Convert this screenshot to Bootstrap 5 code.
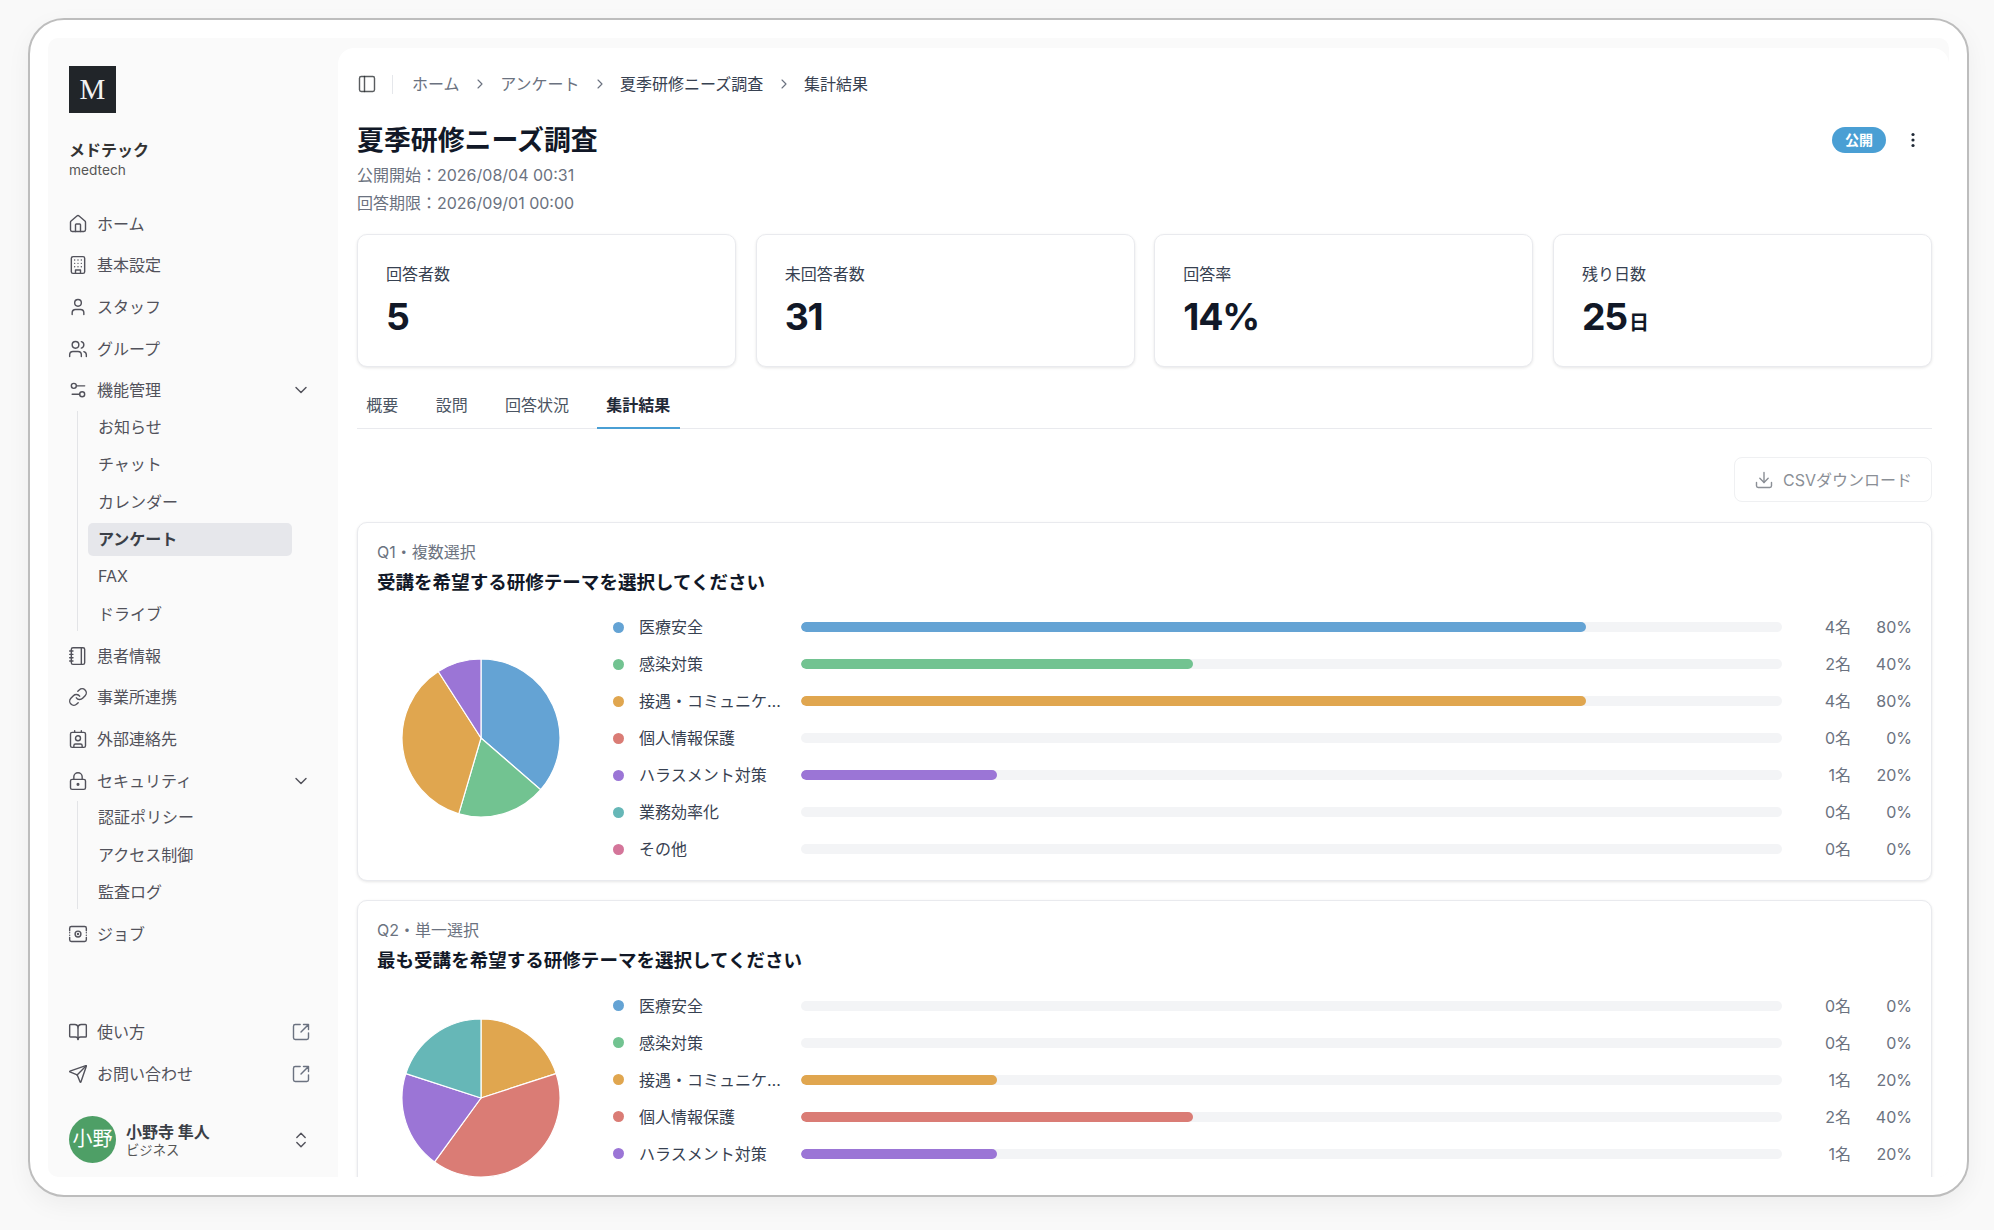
<!DOCTYPE html>
<html lang="ja">
<head>
<meta charset="utf-8">
<title>夏季研修ニーズ調査</title>
<link href="https://cdn.jsdelivr.net/npm/bootstrap@5.3.0/dist/css/bootstrap.min.css" rel="stylesheet">
<style>
html,body{height:100%;}
body{background:#f9f9f9;overflow:hidden;font-family:Inter,"Noto Sans CJK JP",sans-serif;font-size:16px;color:#374151;}
.shell{width:1941px;height:1179px;margin:18px 0 0 28px;padding:18px;background:#fff;border:2px solid #bdbdbd;border-radius:36px;box-shadow:0 8px 24px rgba(0,0,0,.05);}
.shell-inner{height:100%;background:#fafafa;border-radius:10px;overflow:hidden;padding-top:10px;}
.side{width:290px;padding:18px 27px 14px 21px;height:100%;flex:none;color:#52525b;}
.logo-box{width:47px;height:47px;background:#212529;color:#f2f2f2;font-family:"Liberation Serif",serif;font-size:29px;line-height:47px;text-align:center;}
.org-name{font-weight:700;font-size:16px;line-height:22px;margin-top:26px;color:#333;}
.org-sub{font-size:13.7px;line-height:18px;color:#555;}
.nav-list{margin-top:24px;}
.nav-row{height:41.6px;display:flex;align-items:center;gap:9px;color:#52525b;text-decoration:none;margin-left:-1px;}
.nav-row .tail{margin-left:auto;}
.ico{width:20px;height:20px;flex:none;fill:none;stroke:currentColor;stroke-width:1.7;stroke-linecap:round;stroke-linejoin:round;}
.tail-ext{color:#6b7280;}
.sub-list{margin:-2.5px 0 1.4px 8px;padding-left:10px;border-left:1px solid #e3e4e7;}
.sub-item{display:block;height:33.2px;line-height:33.2px;margin:0 19px 4.13px 0;padding-left:10px;border-radius:5px;color:#52525b;text-decoration:none;}
.sub-item:first-child{margin-top:2.6px;}
.sub-item.is-on{background:#e6e7eb;font-weight:700;color:#3a3f47;}
.user-row{margin-top:21.5px;gap:10px;}
.ava{width:47px;height:47px;border-radius:50%;background:#4e9f66;color:#fff;font-size:20px;line-height:47px;text-align:center;flex:none;white-space:nowrap;overflow:hidden;}
.u-name{font-weight:700;line-height:20px;color:#3a3f47;}
.u-plan{font-size:13.33px;line-height:16px;color:#555;}
.mainp{background:#fff;border-radius:16px 16px 0 0;padding:24px 17px 0 19px;height:100%;overflow:hidden;min-width:0;}
.crumb-bar{height:24px;}
.crumb-sep{width:1px;height:19px;background:#e5e7eb;margin:0 19px 0 15px;}
.crumb-a{color:#6b7280;text-decoration:none;}
.crumb-b{color:#374151;}
.crumb-chev{width:16px;height:16px;margin:0 12.3px;fill:none;stroke:#6b7280;stroke-width:1.7;stroke-linecap:round;stroke-linejoin:round;flex:none;}
.page-title{font-size:26.9px;font-weight:700;line-height:36px;margin:26px 0 3px;color:#111827;}
.meta-line{line-height:28px;color:#6b7280;}
.head-tools{margin-top:31px;}
.pub-badge{background:#4a9fd4;color:#fff;font-size:14px;font-weight:700;width:54px;height:26px;line-height:26px;padding:0;border-radius:13px;}
.kebab{width:20px;height:20px;margin:0 9px 0 17px;fill:#1f2937;}
.stat-grid{display:grid;grid-template-columns:repeat(4,1fr);gap:19.5px;margin-top:17px;}
.stat-card{height:133px;border:1px solid #e9eaee;border-radius:10px;box-shadow:0 1px 3px rgba(0,0,0,.1);padding:27px 28px 0;}
.stat-label{line-height:24px;color:#374151;}
.stat-num{font-size:37.33px;font-weight:700;line-height:46px;margin-top:8px;color:#111827;letter-spacing:-.03em;}
.stat-unit{font-size:20px;margin-left:2px;letter-spacing:0;}
.tabs-wrap{margin-top:19px;height:43px;border-bottom:1.5px solid #e9eaee;gap:18.67px;}
.tabs-wrap .nav-link{padding:0 9.33px;height:43px;line-height:38px;color:#4b5563;}
.tabs-wrap .nav-link.active{font-weight:700;color:#1f2937;border-bottom:2.67px solid #4a9fd4;}
.csv-row{margin-top:28px;}
.csv-btn{width:198px;height:45px;padding:0;display:flex;align-items:center;justify-content:center;gap:9px;border:1px solid #eff0f2;border-radius:8px;color:#8b8f96;font-size:16px;background:#fff;}
.q-card{border:1px solid #e9eaee;border-radius:10px;box-shadow:0 1px 3px rgba(0,0,0,.1);padding:17px 19px 12px;margin-top:19.5px;}
.q-kind{line-height:24px;color:#6b7280;}
.q-title{font-size:18.55px;font-weight:700;line-height:28px;margin:4px 0 13px;color:#111827;}
.pie-col{width:208px;flex:none;margin-right:28px;}
.pie-col svg{width:160px;height:160px;display:block;}
.pie-col path{stroke:#fff;stroke-width:1.2;}
.q-row{height:37px;}
.dot{width:11px;height:11px;border-radius:50%;flex:none;margin-right:15px;}
.opt-name{width:146px;margin-right:16px;flex:none;color:#374151;white-space:nowrap;overflow:hidden;text-overflow:ellipsis;}
.bar-track{height:10px;flex:1 1 auto;background:#f3f4f6;border-radius:5px;}
.bar-fill{border-radius:5px;}
.q-count{width:69px;text-align:right;flex:none;color:#6b7280;}
.q-pct{width:61px;text-align:right;flex:none;color:#6b7280;}
.c1{background:#64a3d4;}.c2{background:#72c391;}.c3{background:#e0a64f;}.c4{background:#da7c75;}.c5{background:#9b75d6;}.c6{background:#66b7b7;}.c7{background:#d4759a;}
</style>
</head>
<body>
<div class="shell">
<div class="shell-inner d-flex">
  <aside class="side d-flex flex-column">
    <div class="logo-box">M</div>
    <div class="org-name">メドテック</div>
    <div class="org-sub">medtech</div>
    <div class="nav-list">
      <a class="nav-row" href="#"><svg class="ico" viewBox="0 0 24 24"><path d="M15 21v-8a1 1 0 0 0-1-1h-4a1 1 0 0 0-1 1v8"/><path d="M3 10a2 2 0 0 1 .709-1.528l7-5.999a2 2 0 0 1 2.582 0l7 5.999A2 2 0 0 1 21 10v9a2 2 0 0 1-2 2H5a2 2 0 0 1-2-2z"/></svg>ホーム</a>
      <a class="nav-row" href="#"><svg class="ico" viewBox="0 0 24 24"><rect x="4" y="2" width="16" height="20" rx="2"/><path d="M9 22v-4h6v4M8 6h.01M16 6h.01M12 6h.01M12 10h.01M12 14h.01M16 10h.01M16 14h.01M8 10h.01M8 14h.01"/></svg>基本設定</a>
      <a class="nav-row" href="#"><svg class="ico" viewBox="0 0 24 24"><path d="M19 21v-2a4 4 0 0 0-4-4H9a4 4 0 0 0-4 4v2"/><circle cx="12" cy="7" r="4"/></svg>スタッフ</a>
      <a class="nav-row" href="#"><svg class="ico" viewBox="0 0 24 24"><path d="M16 21v-2a4 4 0 0 0-4-4H6a4 4 0 0 0-4 4v2"/><circle cx="9" cy="7" r="4"/><path d="M22 21v-2a4 4 0 0 0-3-3.87M16 3.13a4 4 0 0 1 0 7.75"/></svg>グループ</a>
      <a class="nav-row" href="#"><svg class="ico" viewBox="0 0 24 24"><path d="M20 7h-9M14 17H5"/><circle cx="17" cy="17" r="3"/><circle cx="7" cy="7" r="3"/></svg>機能管理<svg class="ico tail" viewBox="0 0 24 24"><path d="m6 9 6 6 6-6"/></svg></a>
      <div class="sub-list">
        <a class="sub-item" href="#">お知らせ</a>
        <a class="sub-item" href="#">チャット</a>
        <a class="sub-item" href="#">カレンダー</a>
        <a class="sub-item is-on" href="#">アンケート</a>
        <a class="sub-item" href="#">FAX</a>
        <a class="sub-item" href="#">ドライブ</a>
      </div>
      <a class="nav-row" href="#"><svg class="ico" viewBox="0 0 24 24"><path d="M2 6h4M2 10h4M2 14h4M2 18h4M16 2v20"/><rect x="4" y="2" width="16" height="20" rx="2"/></svg>患者情報</a>
      <a class="nav-row" href="#"><svg class="ico" viewBox="0 0 24 24"><path d="M10 13a5 5 0 0 0 7.54.54l3-3a5 5 0 0 0-7.07-7.07l-1.72 1.71"/><path d="M14 11a5 5 0 0 0-7.54-.54l-3 3a5 5 0 0 0 7.07 7.07l1.71-1.71"/></svg>事業所連携</a>
      <a class="nav-row" href="#"><svg class="ico" viewBox="0 0 24 24"><path d="M16 2v2M8 2v2M7 22v-2a2 2 0 0 1 2-2h6a2 2 0 0 1 2 2v2"/><circle cx="12" cy="11" r="3"/><rect x="3" y="4" width="18" height="18" rx="2"/></svg>外部連絡先</a>
      <a class="nav-row" href="#"><svg class="ico" viewBox="0 0 24 24"><circle cx="12" cy="16" r="1"/><rect x="3" y="10" width="18" height="12" rx="2"/><path d="M7 10V7a5 5 0 0 1 10 0v3"/></svg>セキュリティ<svg class="ico tail" viewBox="0 0 24 24"><path d="m6 9 6 6 6-6"/></svg></a>
      <div class="sub-list">
        <a class="sub-item" href="#">認証ポリシー</a>
        <a class="sub-item" href="#">アクセス制御</a>
        <a class="sub-item" href="#">監査ログ</a>
      </div>
      <a class="nav-row" href="#"><svg class="ico" viewBox="0 0 24 24"><path d="M2 8V5a2 2 0 0 1 2-2h16a2 2 0 0 1 2 2v3M2 16v3a2 2 0 0 0 2 2h16a2 2 0 0 0 2-2v-3M2 10.5h.01M2 13.5h.01M22 10.5h.01M22 13.5h.01"/><circle cx="12" cy="12" r="3.5"/><circle cx="12" cy="12" r=".6"/></svg>ジョブ</a>
    </div>
    <div class="mt-auto">
      <a class="nav-row" href="#"><svg class="ico" viewBox="0 0 24 24"><path d="M12 7v14"/><path d="M3 18a1 1 0 0 1-1-1V4a1 1 0 0 1 1-1h5a4 4 0 0 1 4 4 4 4 0 0 1 4-4h5a1 1 0 0 1 1 1v13a1 1 0 0 1-1 1h-6a3 3 0 0 0-3 3 3 3 0 0 0-3-3z"/></svg>使い方<svg class="ico tail tail-ext" viewBox="0 0 24 24"><path d="M21 13v6a2 2 0 0 1-2 2H5a2 2 0 0 1-2-2V5a2 2 0 0 1 2-2h6"/><path d="m21 3-9 9M15 3h6v6"/></svg></a>
      <a class="nav-row" href="#"><svg class="ico" viewBox="0 0 24 24"><path d="M14.536 21.686a.5.5 0 0 0 .937-.024l6.5-19a.496.496 0 0 0-.635-.635l-19 6.5a.5.5 0 0 0-.024.937l7.93 3.18a2 2 0 0 1 1.112 1.11z"/><path d="m21.854 2.147-10.94 10.939"/></svg>お問い合わせ<svg class="ico tail tail-ext" viewBox="0 0 24 24"><path d="M21 13v6a2 2 0 0 1-2 2H5a2 2 0 0 1-2-2V5a2 2 0 0 1 2-2h6"/><path d="m21 3-9 9M15 3h6v6"/></svg></a>
      <div class="d-flex align-items-center user-row">
        <div class="ava">小野</div>
        <div><div class="u-name">小野寺 隼人</div><div class="u-plan">ビジネス</div></div>
        <svg class="ico ms-auto" viewBox="0 0 24 24"><path d="m7 15 5 5 5-5M7 9l5-5 5 5"/></svg>
      </div>
    </div>
  </aside>

  <main class="mainp flex-grow-1">
    <div class="crumb-bar d-flex align-items-center">
      <svg class="ico text-body-secondary" viewBox="0 0 24 24"><rect x="3" y="3" width="18" height="18" rx="2"/><path d="M9 3v18"/></svg>
      <div class="crumb-sep"></div>
      <a class="crumb-a" href="#">ホーム</a>
      <svg class="crumb-chev" viewBox="0 0 24 24"><path d="m9 18 6-6-6-6"/></svg>
      <a class="crumb-a" href="#">アンケート</a>
      <svg class="crumb-chev" viewBox="0 0 24 24"><path d="m9 18 6-6-6-6"/></svg>
      <span class="crumb-b">夏季研修ニーズ調査</span>
      <svg class="crumb-chev" viewBox="0 0 24 24"><path d="m9 18 6-6-6-6"/></svg>
      <span class="crumb-b">集計結果</span>
    </div>

    <div class="d-flex justify-content-between align-items-start">
      <div>
        <h1 class="page-title">夏季研修ニーズ調査</h1>
        <div class="meta-line">公開開始：2026/08/04 00:31</div>
        <div class="meta-line">回答期限：2026/09/01 00:00</div>
      </div>
      <div class="d-flex align-items-center head-tools">
        <span class="badge pub-badge">公開</span>
        <svg class="kebab" viewBox="0 0 20 20"><circle cx="10" cy="4.5" r="1.6"/><circle cx="10" cy="10" r="1.6"/><circle cx="10" cy="15.5" r="1.6"/></svg>
      </div>
    </div>

    <div class="stat-grid">
      <div class="card stat-card"><div class="stat-label">回答者数</div><div class="stat-num">5</div></div>
      <div class="card stat-card"><div class="stat-label">未回答者数</div><div class="stat-num">31</div></div>
      <div class="card stat-card"><div class="stat-label">回答率</div><div class="stat-num">14%</div></div>
      <div class="card stat-card"><div class="stat-label">残り日数</div><div class="stat-num">25<span class="stat-unit">日</span></div></div>
    </div>

    <ul class="nav tabs-wrap">
      <li class="nav-item"><a class="nav-link" href="#">概要</a></li>
      <li class="nav-item"><a class="nav-link" href="#">設問</a></li>
      <li class="nav-item"><a class="nav-link" href="#">回答状況</a></li>
      <li class="nav-item"><a class="nav-link active" href="#">集計結果</a></li>
    </ul>

    <div class="csv-row d-flex justify-content-end">
      <button type="button" class="btn csv-btn"><svg class="ico" viewBox="0 0 24 24"><path d="M21 15v4a2 2 0 0 1-2 2H5a2 2 0 0 1-2-2v-4M12 15V3"/><path d="m7 10 5 5 5-5"/></svg>CSVダウンロード</button>
    </div>

    <div class="card q-card">
      <div class="q-kind">Q1・複数選択</div>
      <div class="q-title">受講を希望する研修テーマを選択してください</div>
      <div class="d-flex align-items-center">
        <div class="pie-col d-flex justify-content-center">
          <svg viewBox="0 0 160 160">
            <path fill="#64a3d4" d="M80 80L80 1A79 79 0 0 1 139.7 131.74Z"/>
            <path fill="#72c391" d="M80 80L139.7 131.74A79 79 0 0 1 57.75 155.8Z"/>
            <path fill="#e0a64f" d="M80 80L57.75 155.8A79 79 0 0 1 37.29 13.54Z"/>
            <path fill="#9b75d6" d="M80 80L37.29 13.54A79 79 0 0 1 80 1Z"/>
          </svg>
        </div>
        <div class="flex-grow-1">
          <div class="q-row d-flex align-items-center"><span class="dot c1"></span><span class="opt-name">医療安全</span><div class="progress bar-track"><div class="progress-bar bar-fill c1" style="width:80%"></div></div><span class="q-count">4名</span><span class="q-pct">80%</span></div>
          <div class="q-row d-flex align-items-center"><span class="dot c2"></span><span class="opt-name">感染対策</span><div class="progress bar-track"><div class="progress-bar bar-fill c2" style="width:40%"></div></div><span class="q-count">2名</span><span class="q-pct">40%</span></div>
          <div class="q-row d-flex align-items-center"><span class="dot c3"></span><span class="opt-name">接遇・コミュニケーション</span><div class="progress bar-track"><div class="progress-bar bar-fill c3" style="width:80%"></div></div><span class="q-count">4名</span><span class="q-pct">80%</span></div>
          <div class="q-row d-flex align-items-center"><span class="dot c4"></span><span class="opt-name">個人情報保護</span><div class="progress bar-track"><div class="progress-bar bar-fill c4" style="width:0%"></div></div><span class="q-count">0名</span><span class="q-pct">0%</span></div>
          <div class="q-row d-flex align-items-center"><span class="dot c5"></span><span class="opt-name">ハラスメント対策</span><div class="progress bar-track"><div class="progress-bar bar-fill c5" style="width:20%"></div></div><span class="q-count">1名</span><span class="q-pct">20%</span></div>
          <div class="q-row d-flex align-items-center"><span class="dot c6"></span><span class="opt-name">業務効率化</span><div class="progress bar-track"><div class="progress-bar bar-fill c6" style="width:0%"></div></div><span class="q-count">0名</span><span class="q-pct">0%</span></div>
          <div class="q-row d-flex align-items-center"><span class="dot c7"></span><span class="opt-name">その他</span><div class="progress bar-track"><div class="progress-bar bar-fill c7" style="width:0%"></div></div><span class="q-count">0名</span><span class="q-pct">0%</span></div>
        </div>
      </div>
    </div>

    <div class="card q-card">
      <div class="q-kind">Q2・単一選択</div>
      <div class="q-title">最も受講を希望する研修テーマを選択してください</div>
      <div class="d-flex align-items-center">
        <div class="pie-col d-flex justify-content-center">
          <svg viewBox="0 0 160 160">
            <path fill="#e0a64f" d="M80 80L80 1A79 79 0 0 1 155.13 55.59Z"/>
            <path fill="#da7c75" d="M80 80L155.13 55.59A79 79 0 0 1 33.56 143.91Z"/>
            <path fill="#9b75d6" d="M80 80L33.56 143.91A79 79 0 0 1 4.87 55.59Z"/>
            <path fill="#66b7b7" d="M80 80L4.87 55.59A79 79 0 0 1 80 1Z"/>
          </svg>
        </div>
        <div class="flex-grow-1">
          <div class="q-row d-flex align-items-center"><span class="dot c1"></span><span class="opt-name">医療安全</span><div class="progress bar-track"><div class="progress-bar bar-fill c1" style="width:0%"></div></div><span class="q-count">0名</span><span class="q-pct">0%</span></div>
          <div class="q-row d-flex align-items-center"><span class="dot c2"></span><span class="opt-name">感染対策</span><div class="progress bar-track"><div class="progress-bar bar-fill c2" style="width:0%"></div></div><span class="q-count">0名</span><span class="q-pct">0%</span></div>
          <div class="q-row d-flex align-items-center"><span class="dot c3"></span><span class="opt-name">接遇・コミュニケーション</span><div class="progress bar-track"><div class="progress-bar bar-fill c3" style="width:20%"></div></div><span class="q-count">1名</span><span class="q-pct">20%</span></div>
          <div class="q-row d-flex align-items-center"><span class="dot c4"></span><span class="opt-name">個人情報保護</span><div class="progress bar-track"><div class="progress-bar bar-fill c4" style="width:40%"></div></div><span class="q-count">2名</span><span class="q-pct">40%</span></div>
          <div class="q-row d-flex align-items-center"><span class="dot c5"></span><span class="opt-name">ハラスメント対策</span><div class="progress bar-track"><div class="progress-bar bar-fill c5" style="width:20%"></div></div><span class="q-count">1名</span><span class="q-pct">20%</span></div>
          <div class="q-row d-flex align-items-center"><span class="dot c6"></span><span class="opt-name">業務効率化</span><div class="progress bar-track"><div class="progress-bar bar-fill c6" style="width:20%"></div></div><span class="q-count">1名</span><span class="q-pct">20%</span></div>
        </div>
      </div>
    </div>
  </main>
</div>
</div>
<script src="https://cdn.jsdelivr.net/npm/bootstrap@5.3.0/dist/js/bootstrap.bundle.min.js"></script>
</body>
</html>
